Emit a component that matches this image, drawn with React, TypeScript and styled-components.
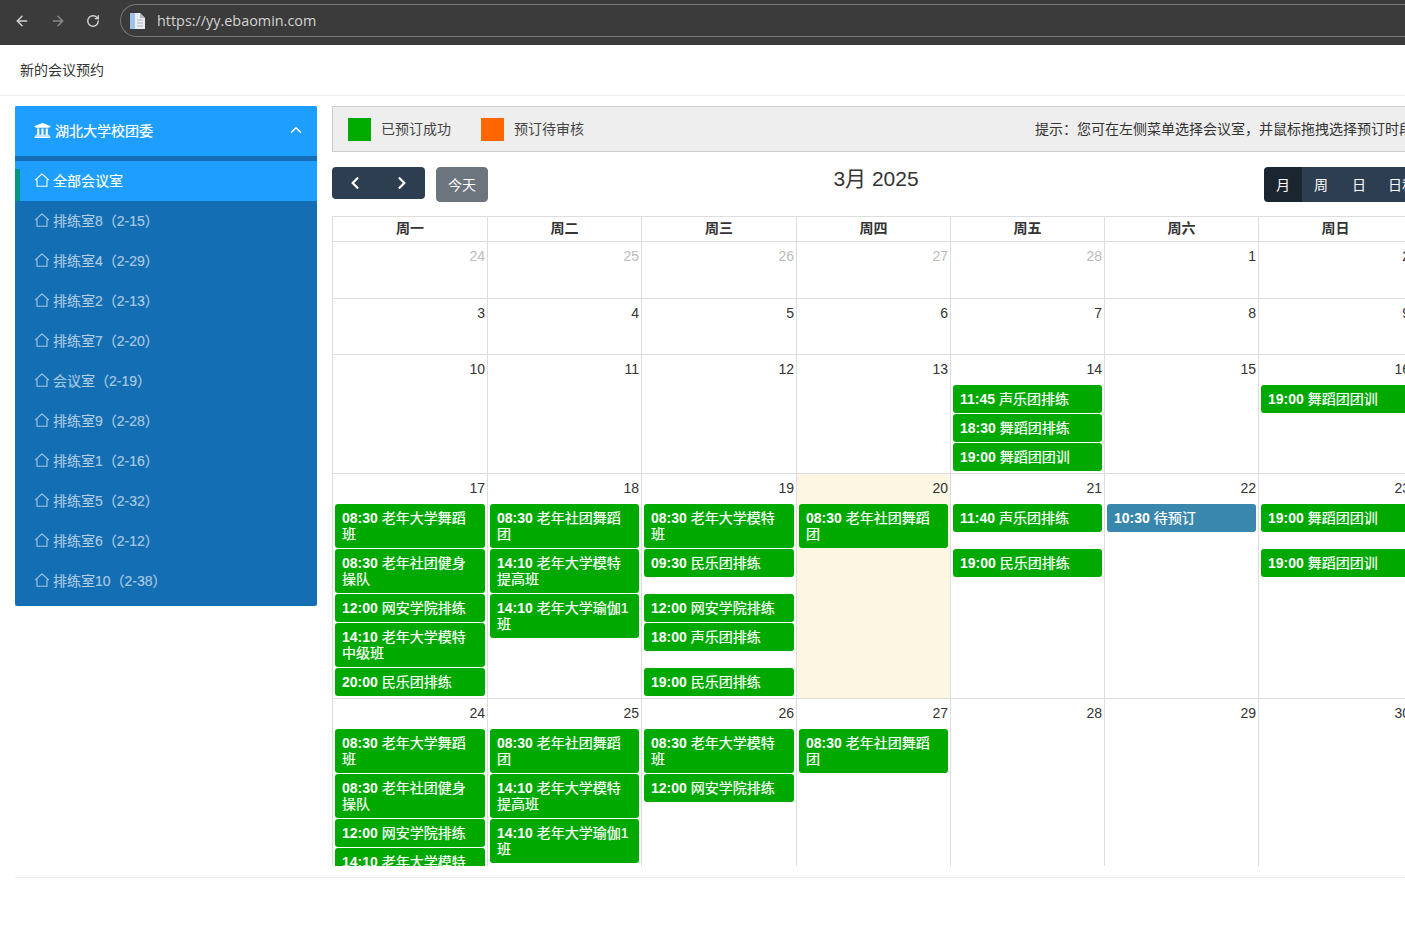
import React from 'react';
import styled, { createGlobalStyle } from 'styled-components';
import { ArrowLeft, ArrowRight, RotateCw, ChevronUp } from 'lucide-react';
import { FaChevronLeft, FaChevronRight, FaUniversity } from 'react-icons/fa';

const FONT = '"Liberation Sans", "Noto Sans CJK SC", sans-serif';

const GlobalStyle = createGlobalStyle`
  html, body {
    margin: 0;
    height: 100%;
    overflow: hidden;
    background: #fff;
  }
  * { box-sizing: border-box; }
  body {
    font-family: ${FONT};
    font-size: 14px;
    color: #333;
  }
`;

const Page = styled.div`
  width: 1405px;
  height: 934px;
  overflow: hidden;
`;

const BrowserBar = styled.div`
  height: 45px;
  background: #3b3b3b;
  display: flex;
  align-items: flex-start;
  padding: 4px 0 0 14px;
`;

const BrowserButton = styled.span<{ $dim?: boolean }>`
  width: 36px;
  height: 33px;
  flex: none;
  display: flex;
  align-items: center;
  color: ${(p) => (p.$dim ? '#8a8a8a' : '#d4d4d4')};
`;

const AddressBar = styled.div`
  width: 1300px;
  height: 33px;
  flex: none;
  margin-left: -2px;
  border: 1px solid #777;
  border-right: 0;
  border-radius: 17px 0 0 17px;
  display: flex;
  align-items: center;
  gap: 10px;
  padding-left: 8px;
  font-family: "Open Sans", sans-serif;
  font-size: 14.4px;
  color: #d2d2d2;
`;

const TopBar = styled.div`
  height: 51px;
  padding: 0 0 3px 20px;
  display: flex;
  align-items: center;
  font-size: 14px;
  color: #333;
  border-bottom: 1px solid #eee;
`;

const Content = styled.div`
  display: flex;
  align-items: flex-start;
  gap: 15px;
  width: 1428px;
  padding: 10px 15px 0;
`;

const Sidebar = styled.aside`
  width: 302px;
  flex: none;
  padding-bottom: 5px;
  background: #146eb4;
  border-radius: 2px;
  overflow: hidden;
`;

const SideHeader = styled.div`
  height: 55px;
  background: #1e9fff;
  border-bottom: 5px solid #146eb4;
  display: flex;
  align-items: center;
  padding: 0 12px 2px 19px;
  gap: 4px;
  color: #fff;
  font-size: 14px;
  -webkit-text-stroke: 0.2px currentColor;
`;

const SideTitle = styled.span`
  flex: 1;
`;

const SideItem = styled.div<{ $active?: boolean }>`
  position: relative;
  height: 40px;
  display: flex;
  align-items: center;
  gap: 3px;
  padding: 0 0 2px 19px;
  font-size: 14px;
  -webkit-text-stroke: 0.15px currentColor;
  background: ${(p) => (p.$active ? '#1e9fff' : 'transparent')};
  color: ${(p) => (p.$active ? '#fff' : 'rgba(255, 255, 255, 0.62)')};
  ${(p) =>
    p.$active &&
    `&::before {
      content: "";
      position: absolute;
      left: 0;
      top: 8px;
      bottom: 0;
      width: 5px;
      background: #009688;
    }`}
`;

const Main = styled.main`
  width: 1081px;
  flex: none;
`;

const Legend = styled.div`
  height: 46px;
  background: #eee;
  border: 1px solid #ccc;
  border-right: 0;
  display: flex;
  align-items: center;
  padding-left: 15px;
  white-space: nowrap;
  color: #444;
`;

const Swatch = styled.span<{ $color: string }>`
  width: 23px;
  height: 23px;
  flex: none;
  margin-right: 10px;
  background: ${(p) => p.$color};
`;

const LegendLabel = styled.span`
  margin: -2px 30px 0 0;
`;

const Hint = styled.span`
  margin: -2px 0 0 auto;
  color: #333;
`;

const Toolbar = styled.div`
  display: flex;
  justify-content: space-between;
  align-items: flex-start;
  width: 1096px;
  height: 64px;
  padding-top: 15px;
`;

const ToolGroup = styled.div`
  display: flex;
  align-items: flex-start;
  gap: 11px;
`;

const NavGroup = styled.div`
  display: flex;
  border-radius: 4px;
  overflow: hidden;
  flex: none;
`;

const NavButton = styled.button`
  width: 46.5px;
  height: 32px;
  border: 0;
  padding: 0;
  background: #2c3e50;
  color: #fff;
  display: flex;
  align-items: center;
  justify-content: center;
`;

const TodayButton = styled.button`
  width: 52px;
  height: 35px;
  padding: 0 0 2px;
  border: 1px solid #6c757d;
  border-radius: 4px;
  background: #6c757d;
  color: #fff;
  font: 14px ${FONT};
`;

const Title = styled.h2`
  margin: 0;
  font-size: 21px;
  line-height: 24px;
  font-weight: 400;
  color: #333;
`;

const ViewButton = styled.button<{ $active?: boolean }>`
  height: 35px;
  padding: 0 12px 2px;
  border: 0;
  background: ${(p) => (p.$active ? '#1a252f' : '#2c3e50')};
  color: #fff;
  font: 14px ${FONT};
  &:last-child {
    padding-left: 10px;
  }
`;

const Calendar = styled.div`
  height: 650px;
  overflow: hidden;
  border-left: 1px solid #ddd;
`;

const Columns = styled.div`
  display: grid;
  grid-template-columns: 155px 154px 155px 154px 154px 154px 154px;
`;

const HeadCell = styled.div`
  height: 25px;
  border-top: 1px solid #ddd;
  border-right: 1px solid #ddd;
  text-align: center;
  font-weight: 700;
  line-height: 22px;
`;

const Week = styled(Columns)<{ $minHeight?: number }>`
  grid-template-rows: 30px repeat(5, auto) minmax(1px, 1fr);
  min-height: ${(p) => p.$minHeight ?? 0}px;
  border-top: 1px solid #ddd;
`;

const DayCell = styled.div<{ $day: number; $today?: boolean; $other?: boolean }>`
  grid-column: ${(p) => p.$day};
  grid-row: 1 / -1;
  border-right: 1px solid #ddd;
  text-align: right;
  padding: 6px 2px 0 0;
  line-height: 16px;
  color: ${(p) => (p.$other ? '#bbb' : '#333')};
  background: ${(p) => (p.$today ? '#fdf6e3' : 'transparent')};
`;

const EventBar = styled.div<{ $day: number; $slot: number; $span?: number; $pending?: boolean }>`
  grid-column: ${(p) => p.$day};
  grid-row: ${(p) => p.$slot + 1} / span ${(p) => p.$span ?? 1};
  align-self: start;
  min-width: 0;
  margin: 0 3px 1px 2px;
  padding: 6px 7px;
  border-radius: 3px;
  background: ${(p) => (p.$pending ? '#3a87ad' : '#00a900')};
  color: #fff;
  line-height: 16px;
  z-index: 1;
`;

const EventTime = styled.b`
  font-weight: 700;
`;

const EventName = styled.span`
  -webkit-text-stroke: 0.2px currentColor;
`;

const Rule = styled.div`
  margin: 11px 0 0 15px;
  border-top: 1px solid #eee;
`;

type Ev = { day: number; slot: number; span?: number; time: string; name: string; pending?: boolean };
type WeekData = { minHeight?: number; dates: number[]; firstCurrent?: number; events: Ev[] };

const rooms = ['排练室8（2-15）', '排练室4（2-29）', '排练室2（2-13）', '排练室7（2-20）', '会议室（2-19）', '排练室9（2-28）', '排练室1（2-16）', '排练室5（2-32）', '排练室6（2-12）', '排练室10（2-38）'];
const weekdays = ['周一', '周二', '周三', '周四', '周五', '周六', '周日'];

const weeks: WeekData[] = [
  { minHeight: 56.5, dates: [24, 25, 26, 27, 28, 1, 2], firstCurrent: 5, events: [] },
  { minHeight: 56.5, dates: [3, 4, 5, 6, 7, 8, 9], events: [] },
  {
    dates: [10, 11, 12, 13, 14, 15, 16],
    events: [
      { day: 5, slot: 1, time: '11:45', name: '声乐团排练' },
      { day: 5, slot: 2, time: '18:30', name: '舞蹈团排练' },
      { day: 5, slot: 3, time: '19:00', name: '舞蹈团团训' },
      { day: 7, slot: 1, time: '19:00', name: '舞蹈团团训' },
    ],
  },
  {
    dates: [17, 18, 19, 20, 21, 22, 23],
    events: [
      { day: 1, slot: 1, time: '08:30', name: '老年大学舞蹈班' },
      { day: 1, slot: 2, time: '08:30', name: '老年社团健身操队' },
      { day: 1, slot: 3, time: '12:00', name: '网安学院排练' },
      { day: 1, slot: 4, time: '14:10', name: '老年大学模特中级班' },
      { day: 1, slot: 5, time: '20:00', name: '民乐团排练' },
      { day: 2, slot: 1, time: '08:30', name: '老年社团舞蹈团' },
      { day: 2, slot: 2, time: '14:10', name: '老年大学模特提高班' },
      { day: 2, slot: 3, span: 2, time: '14:10', name: '老年大学瑜伽1班' },
      { day: 3, slot: 1, time: '08:30', name: '老年大学模特班' },
      { day: 3, slot: 2, time: '09:30', name: '民乐团排练' },
      { day: 3, slot: 3, time: '12:00', name: '网安学院排练' },
      { day: 3, slot: 4, time: '18:00', name: '声乐团排练' },
      { day: 3, slot: 5, time: '19:00', name: '民乐团排练' },
      { day: 4, slot: 1, time: '08:30', name: '老年社团舞蹈团' },
      { day: 5, slot: 1, time: '11:40', name: '声乐团排练' },
      { day: 5, slot: 2, time: '19:00', name: '民乐团排练' },
      { day: 6, slot: 1, time: '10:30', name: '待预订', pending: true },
      { day: 7, slot: 1, time: '19:00', name: '舞蹈团团训' },
      { day: 7, slot: 2, time: '19:00', name: '舞蹈团团训' },
    ],
  },
  {
    dates: [24, 25, 26, 27, 28, 29, 30],
    events: [
      { day: 1, slot: 1, time: '08:30', name: '老年大学舞蹈班' },
      { day: 1, slot: 2, time: '08:30', name: '老年社团健身操队' },
      { day: 1, slot: 3, time: '12:00', name: '网安学院排练' },
      { day: 1, slot: 4, time: '14:10', name: '老年大学模特中级班' },
      { day: 2, slot: 1, time: '08:30', name: '老年社团舞蹈团' },
      { day: 2, slot: 2, time: '14:10', name: '老年大学模特提高班' },
      { day: 2, slot: 3, span: 2, time: '14:10', name: '老年大学瑜伽1班' },
      { day: 3, slot: 1, time: '08:30', name: '老年大学模特班' },
      { day: 3, slot: 2, time: '12:00', name: '网安学院排练' },
      { day: 4, slot: 1, time: '08:30', name: '老年社团舞蹈团' },
    ],
  },
];

const HomeIcon = () => (
  <svg width="16" height="16" viewBox="0 0 16 16" fill="none" stroke="currentColor" strokeWidth="1.1">
    <path d="M1.4 7.8 8 1.8l6.6 6H13v6.4H3V7.8z" strokeLinejoin="round" />
  </svg>
);

const PageIcon = () => (
  <svg width="18" height="18" viewBox="0 0 18 18">
    <path d="M1 1h10l5 5v11H1z" fill="#e8eef4" />
    <path d="M1 1h5v16H1z" fill="#9cc3e6" />
    <path d="M11 1l5 5h-5z" fill="#b8b8b8" />
    <path d="M8 8h6M8 11h6M8 14h6" stroke="#b5b5b5" />
  </svg>
);

export default function App() {
  return (
    <Page>
      <GlobalStyle />
      <BrowserBar>
        <BrowserButton><ArrowLeft size={16} strokeWidth={2.2} /></BrowserButton>
        <BrowserButton $dim><ArrowRight size={16} strokeWidth={2.2} /></BrowserButton>
        <BrowserButton><RotateCw size={14} strokeWidth={2.4} /></BrowserButton>
        <AddressBar>
          <PageIcon />
          <span>https://yy.ebaomin.com</span>
        </AddressBar>
      </BrowserBar>
      <TopBar>新的会议预约</TopBar>
      <Content>
        <Sidebar>
          <SideHeader>
            <FaUniversity size={17} />
            <SideTitle>湖北大学校团委</SideTitle>
            <ChevronUp size={18} />
          </SideHeader>
          <SideItem $active><HomeIcon />全部会议室</SideItem>
          {rooms.map((room) => (
            <SideItem key={room}><HomeIcon />{room}</SideItem>
          ))}
        </Sidebar>
        <Main>
          <Legend>
            <Swatch $color="#00ab00" />
            <LegendLabel>已预订成功</LegendLabel>
            <Swatch $color="#ff6600" />
            <LegendLabel>预订待审核</LegendLabel>
            <Hint>提示：您可在左侧菜单选择会议室，并鼠标拖拽选择预订时段</Hint>
          </Legend>
          <Toolbar>
            <ToolGroup>
              <NavGroup>
                <NavButton><FaChevronLeft size={14} /></NavButton>
                <NavButton><FaChevronRight size={14} /></NavButton>
              </NavGroup>
              <TodayButton>今天</TodayButton>
            </ToolGroup>
            <Title>3月 2025</Title>
            <NavGroup>
              <ViewButton $active>月</ViewButton>
              <ViewButton>周</ViewButton>
              <ViewButton>日</ViewButton>
              <ViewButton>日程</ViewButton>
            </NavGroup>
          </Toolbar>
          <Calendar>
            <Columns>
              {weekdays.map((d) => <HeadCell key={d}>{d}</HeadCell>)}
            </Columns>
            {weeks.map((week) => (
              <Week key={week.dates[0] + '-' + week.dates[6]} $minHeight={week.minHeight}>
                {week.dates.map((date, i) => (
                  <DayCell
                    key={i}
                    $day={i + 1}
                    $today={date === 20}
                    $other={week.firstCurrent !== undefined && i < week.firstCurrent}
                  >
                    {date}
                  </DayCell>
                ))}
                {week.events.map((ev) => (
                  <EventBar key={ev.day + '-' + ev.slot} $day={ev.day} $slot={ev.slot} $span={ev.span} $pending={ev.pending}>
                    <EventTime>{ev.time}</EventTime> <EventName>{ev.name}</EventName>
                  </EventBar>
                ))}
              </Week>
            ))}
          </Calendar>
        </Main>
      </Content>
      <Rule />
    </Page>
  );
}
